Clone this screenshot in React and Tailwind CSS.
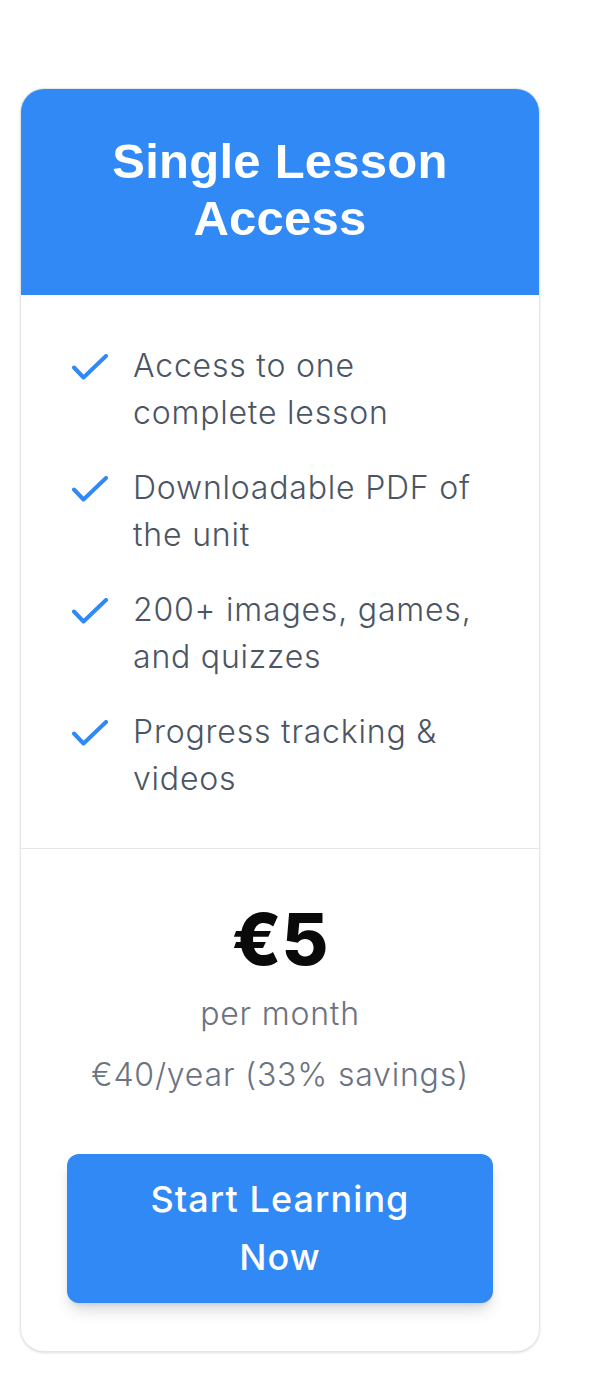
const features = [
  "Access to one complete lesson",
  "Downloadable PDF of the unit",
  "200+ images, games, and quizzes",
  "Progress tracking & videos",
];

function CheckIcon() {
  return (
    <svg width="36" height="27" viewBox="0 0 36 27" fill="none" className="shrink-0 mt-[11px]">
      <path
        d="M2 13.5 L11.5 23.5 L34 2"
        stroke="#3089f5"
        strokeWidth="4"
        strokeLinecap="round"
        strokeLinejoin="round"
      />
    </svg>
  );
}

export default function App() {
  return (
    <div className="min-h-screen bg-white pt-[88px] pl-5 font-['Inter',sans-serif]">
      <div className="w-[520px] rounded-3xl border border-[#e5e7eb] bg-white overflow-hidden shadow-sm">
        {/* header */}
        <div className="bg-[#3089f5] px-8 pt-[44px] pb-[48px] text-center">
          <h2 className="font-['Liberation_Sans',Arial,sans-serif] font-bold text-white text-[49px] leading-[57px] tracking-[0.005em]">
            Single Lesson
            <br />
            Access
          </h2>
        </div>

        {/* features */}
        <ul className="px-[51px] pt-[48px] pb-[46px] flex flex-col gap-[29px] border-b border-[#e5e7eb]">
          {features.map((f) => (
            <li key={f} className="flex items-start gap-[25px]">
              <CheckIcon />
              <span className="text-[32px] leading-[46.5px] font-light text-[#4b5563] tracking-[0.025em]">{f}</span>
            </li>
          ))}
        </ul>

        {/* price */}
        <div className="px-[46px] pt-[54px] pb-12 flex flex-col items-center text-center">
          <div className="text-[72px] leading-none font-extrabold text-[#0a0a0a]">€5</div>
          <div className="mt-[19px] text-[32px] leading-[40px] font-light text-[#6b7280] tracking-[0.025em]">per month</div>
          <div className="mt-[21px] text-[32px] leading-[40px] font-light text-[#6b7280] tracking-[0.025em]">
            €40/year (33% savings)
          </div>
          <button className="mt-[59px] w-full rounded-xl bg-[#3089f5] py-[17px] px-12 text-white text-[36px] leading-[57.5px] font-medium tracking-[0.03em] shadow-lg shadow-black/15">
            Start Learning Now
          </button>
        </div>
      </div>
    </div>
  );
}
